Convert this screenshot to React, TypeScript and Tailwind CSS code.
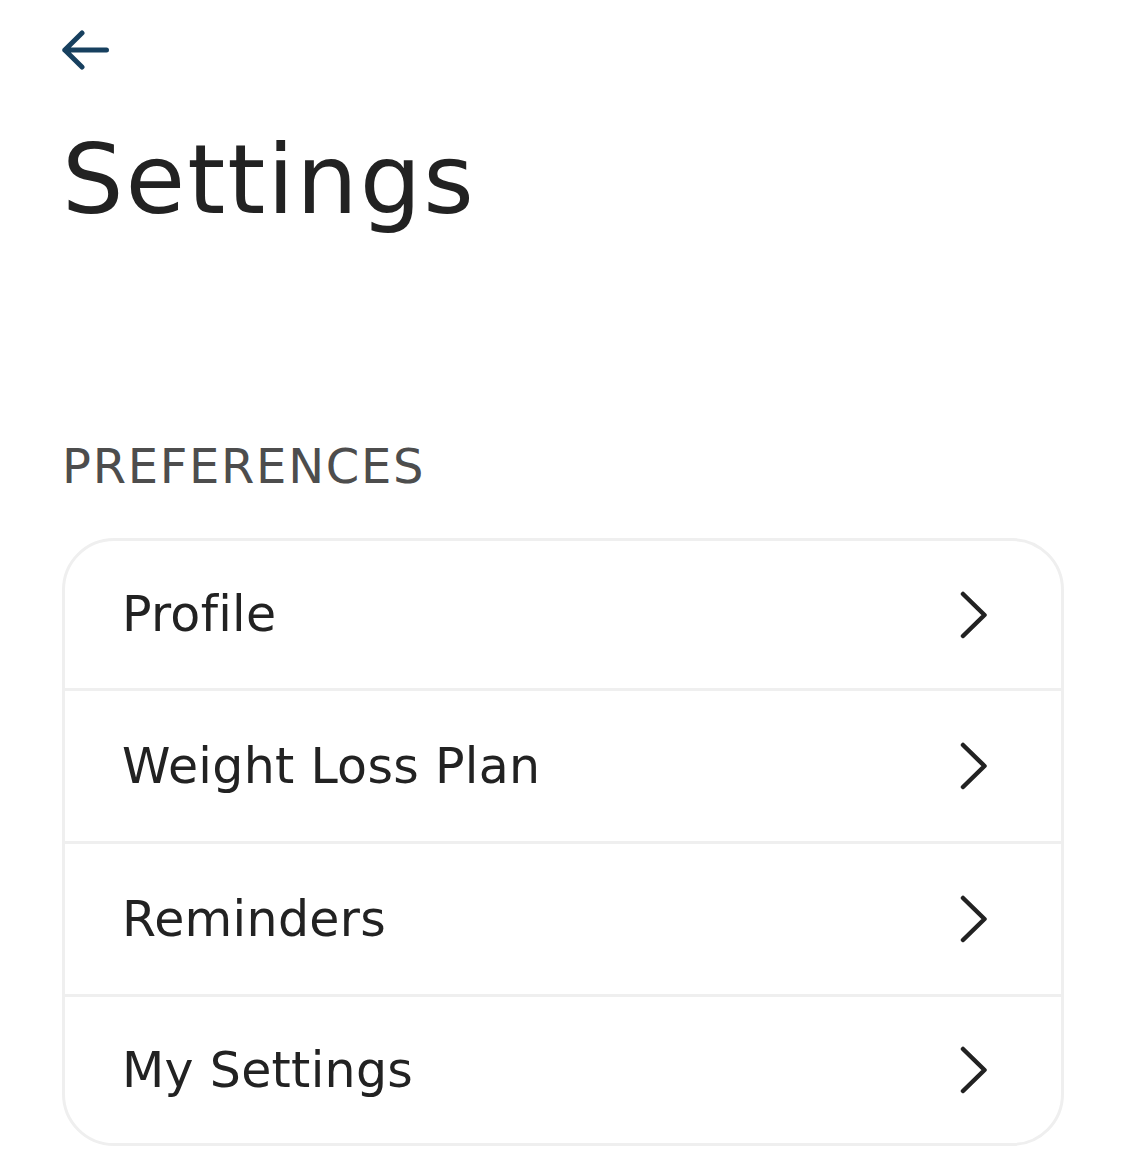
const items = [
  { label: 'Profile', h: 'h-[150px]' },
  { label: 'Weight Loss Plan', h: 'h-[153px]' },
  { label: 'Reminders', h: 'h-[153px]' },
  { label: 'My Settings', h: 'h-[146px]' },
];

function Chevron() {
  return (
    <svg width="27" height="48" viewBox="0 0 27 48" fill="none">
      <path d="M3 3 L24.5 24 L3 45" stroke="#222222" strokeWidth="4.5" strokeLinecap="round" strokeLinejoin="round" />
    </svg>
  );
}

export default function App() {
  return (
    <div
      className="min-h-[1160px] bg-white px-[62px] pt-[30px] text-[#222222]"
      style={{ fontFamily: '"DejaVu Sans", sans-serif' }}
    >
      {/* back */}
      <button className="block">
        <svg width="47" height="40" viewBox="0 0 47 40" fill="none">
          <path d="M2.8 20 H44.5 M20 3 L2.8 20 L20 37" stroke="#17405f" strokeWidth="5" strokeLinecap="round" strokeLinejoin="round" />
        </svg>
      </button>

      <h1 className="mt-[61px] text-[97px] font-normal leading-none tracking-[2px]">Settings</h1>

      <div className="mt-[214px] text-[48px] leading-none tracking-[1.7px] text-[#4d4d4d]">PREFERENCES</div>

      <div className="mt-[48px] w-[1002px] overflow-hidden rounded-[52px] border-[3px] border-[#efefef]">
        {items.map((it, i) => (
          <div
            key={it.label}
            className={`flex ${it.h} items-center justify-between pl-[57px] pr-[74px] ${i < items.length - 1 ? 'border-b-[3px] border-[#efefef]' : ''}`}
          >
            <span className="text-[49px] leading-none tracking-[0.3px]">{it.label}</span>
            <Chevron />
          </div>
        ))}
      </div>
    </div>
  );
}
